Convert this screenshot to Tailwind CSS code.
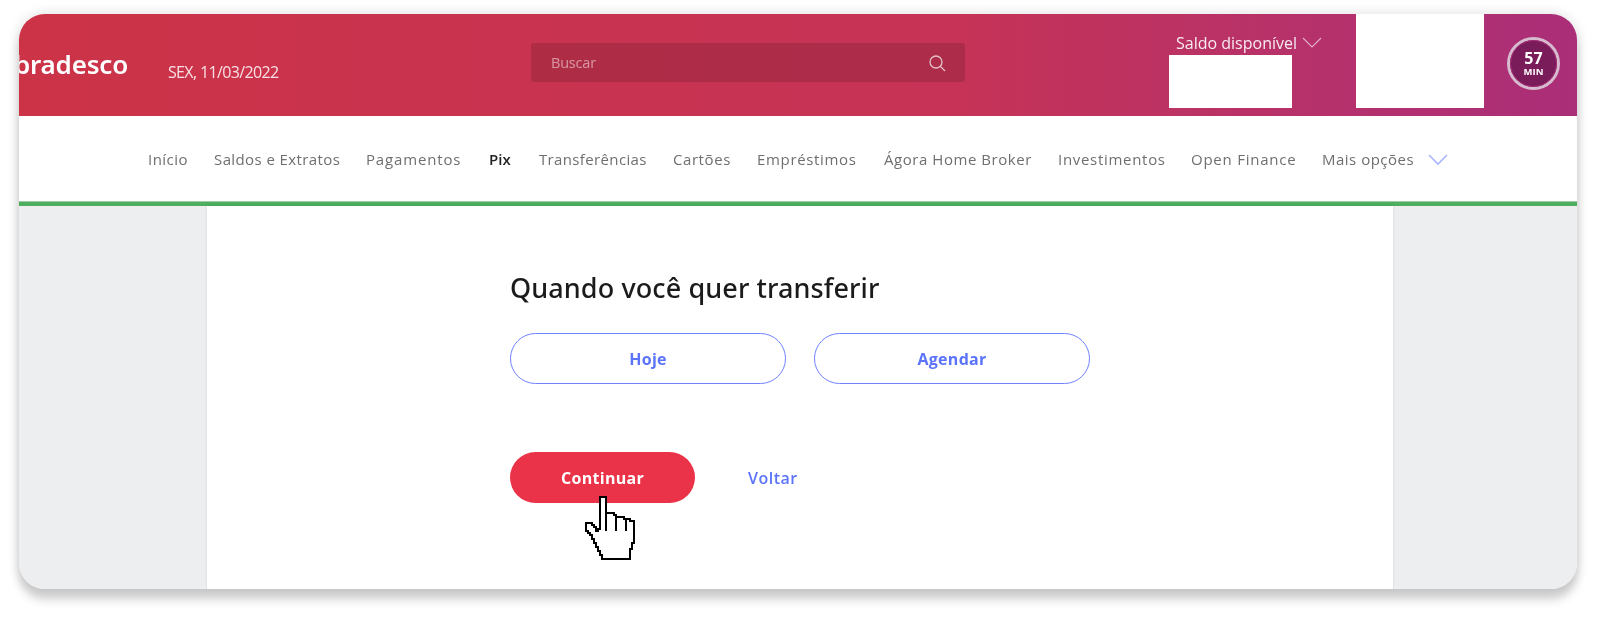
<!DOCTYPE html>
<html lang="pt-BR">
<head>
<meta charset="utf-8">
<script src="https://cdn.jsdelivr.net/npm/@tailwindcss/browser@4"></script>
<title>Bradesco</title>
</head>
<body class="bg-white h-[617px] w-[1600px] overflow-hidden font-['Open_Sans',sans-serif]">
<div class="relative ml-[19px] mt-[14px] w-[1558px] h-[575px] rounded-[26px] shadow-[0_11px_10px_rgba(0,0,0,0.17),0_0_11px_2px_rgba(0,0,0,0.1)]">
  <div class="w-full h-full rounded-[26px] overflow-hidden flex flex-col bg-[#edeef0]">
    <header class="h-[102px] shrink-0 flex bg-linear-to-r from-[#cc3347] via-[#c63356] via-60% to-[#aa2e78] text-white">
      <div class="w-[109px] shrink-0 flex justify-end items-center pb-[2px] whitespace-nowrap blur-[0.7px]">
        <span class="text-[26px] font-semibold tracking-[-0.2px] font-['Noto_Sans',sans-serif]">bradesco</span>
      </div>
      <div class="w-[403px] shrink-0 pl-[40px] pt-[47px] text-[16px] leading-[22px] tracking-[-0.65px] text-white/85 blur-[0.7px] whitespace-nowrap">SEX, 11/03/2022</div>
      <div class="w-[434px] h-[39px] mt-[29px] shrink-0 rounded-[3px] bg-black/13 flex items-center justify-between pl-[20px] pr-[19px]">
        <span class="text-[14.5px] text-white/50 tracking-[-0.2px] blur-[0.7px]">Buscar</span>
        <svg class="w-[18px] h-[18px] text-white/70 blur-[0.4px]" viewBox="0 0 18 18" fill="none" stroke="currentColor" stroke-width="1.3"><circle cx="8" cy="8" r="6"/><path d="M12.5 12.5L17 17"/></svg>
      </div>
      <div class="shrink-0 ml-[204px] w-[178px] flex">
        <div class="w-[123px] flex flex-col">
          <div class="h-[41px] pt-[18px] pl-[7px] flex items-start whitespace-nowrap text-[16px] leading-[22px] text-white/90 font-medium blur-[0.7px]">
            <span>Saldo disponível</span>
            <svg class="ml-[5px] mt-[5px] w-[20px] h-[12px] shrink-0 text-white/60" viewBox="0 0 20 12" fill="none" stroke="currentColor" stroke-width="1.2"><path d="M1 1l9 9 9-9"/></svg>
          </div>
          <div class="w-[123px] h-[53px] bg-white"></div>
        </div>
        <div class="ml-[55px] mt-[20px] w-[2px] h-[58px] bg-white/10"></div>
      </div>
      <div class="ml-[9px] w-[128px] h-[94px] bg-white shrink-0"></div>
      <div class="ml-[23px] mt-[23px] w-[53px] h-[53px] shrink-0 rounded-full border-[3px] border-white/70 bg-[#7a1c5a] flex flex-col items-center justify-center gap-[4px] blur-[0.5px] outline-1 -outline-offset-4 outline-[#aa2e78]">
        <span class="text-[16px] leading-[12px] font-bold">57</span>
        <span class="text-[9.5px] leading-[8px] font-bold">MIN</span>
      </div>
    </header>
    <nav class="h-[85px] shrink-0 bg-white flex items-center gap-[26px] pl-[129px] pt-[2px] whitespace-nowrap text-[15px] text-[#6f6f6f] blur-[0.7px]">
      <span class="w-[40px] tracking-[0.45px]">Início</span>
      <span class="w-[126px] tracking-[0.4px]">Saldos e Extratos</span>
      <span class="w-[97px] tracking-[0.85px]">Pagamentos</span>
      <span class="w-[24px] text-[#222] font-semibold">Pix</span>
      <span class="w-[108px] tracking-[0.36px]">Transferências</span>
      <span class="w-[58px] tracking-[0.57px]">Cartões</span>
      <span class="w-[101px] tracking-[0.66px]">Empréstimos</span>
      <span class="w-[148px] tracking-[0.55px]">Ágora Home Broker</span>
      <span class="w-[107px] tracking-[0.7px]">Investimentos</span>
      <span class="w-[105px] tracking-[0.76px]">Open Finance</span>
      <span class="w-[91px] tracking-[0.5px]">Mais opções</span>
      <svg class="-ml-[11px] w-[20px] h-[12px] text-[#a9b6ff]" viewBox="0 0 20 12" fill="none" stroke="currentColor" stroke-width="1.6"><path d="M1 1l9 9 9-9"/></svg>
    </nav>
    <div class="h-[5px] shrink-0 bg-[#4cae5e] border-t border-[#9ccfa6]"></div>
    <main class="flex-1 ml-[188px] mr-[184px] bg-white pl-[303px] pt-[66px] shadow-[0_0_2px_rgba(0,0,0,0.12)]">
      <h1 class="text-[27px] leading-[32px] tracking-[0.1px] text-[#1b1b1b] font-medium font-['Noto_Sans',sans-serif] blur-[0.6px]">Quando você quer transferir</h1>
      <div class="mt-[29px] flex gap-[28px]">
        <button class="w-[276px] h-[51px] rounded-full border border-[#6f83ff] text-[#5b74fb] text-[16px] tracking-[0.3px] font-bold"><span class="blur-[0.6px] inline-block">Hoje</span></button>
        <button class="w-[276px] h-[51px] rounded-full border border-[#6f83ff] text-[#5b74fb] text-[16px] tracking-[0.3px] font-bold"><span class="blur-[0.6px] inline-block">Agendar</span></button>
      </div>
      <div class="mt-[68px] flex items-center">
        <button class="w-[185px] h-[51px] rounded-full bg-[#ea3349] text-white text-[16px] tracking-[0.3px] font-bold"><span class="blur-[0.6px] inline-block">Continuar</span></button>
        <span class="ml-[53px] text-[#5b74fb] text-[16px] tracking-[0.5px] font-semibold blur-[0.6px]">Voltar</span>
      </div>
    </main>
  </div>
  <svg class="absolute left-[566px] top-[482px] w-[52px] h-[66px]" viewBox="0 0 52 66" shape-rendering="crispEdges" fill="#fff" stroke="#000" stroke-width="2">
    <path d="M15 1H21V17H29V19H31V21H39V23H45V25H49V47H47V53H45V63H17V59H15V55H13V51H11V47H9V43H7V39H5V37H3V35H1V27H7V29H9V31H11V35H13V33H15Z"/>
    <path d="M21 17V35M31 21V35M41 23V35" fill="none"/>
  </svg>
</div>
</body>
</html>
